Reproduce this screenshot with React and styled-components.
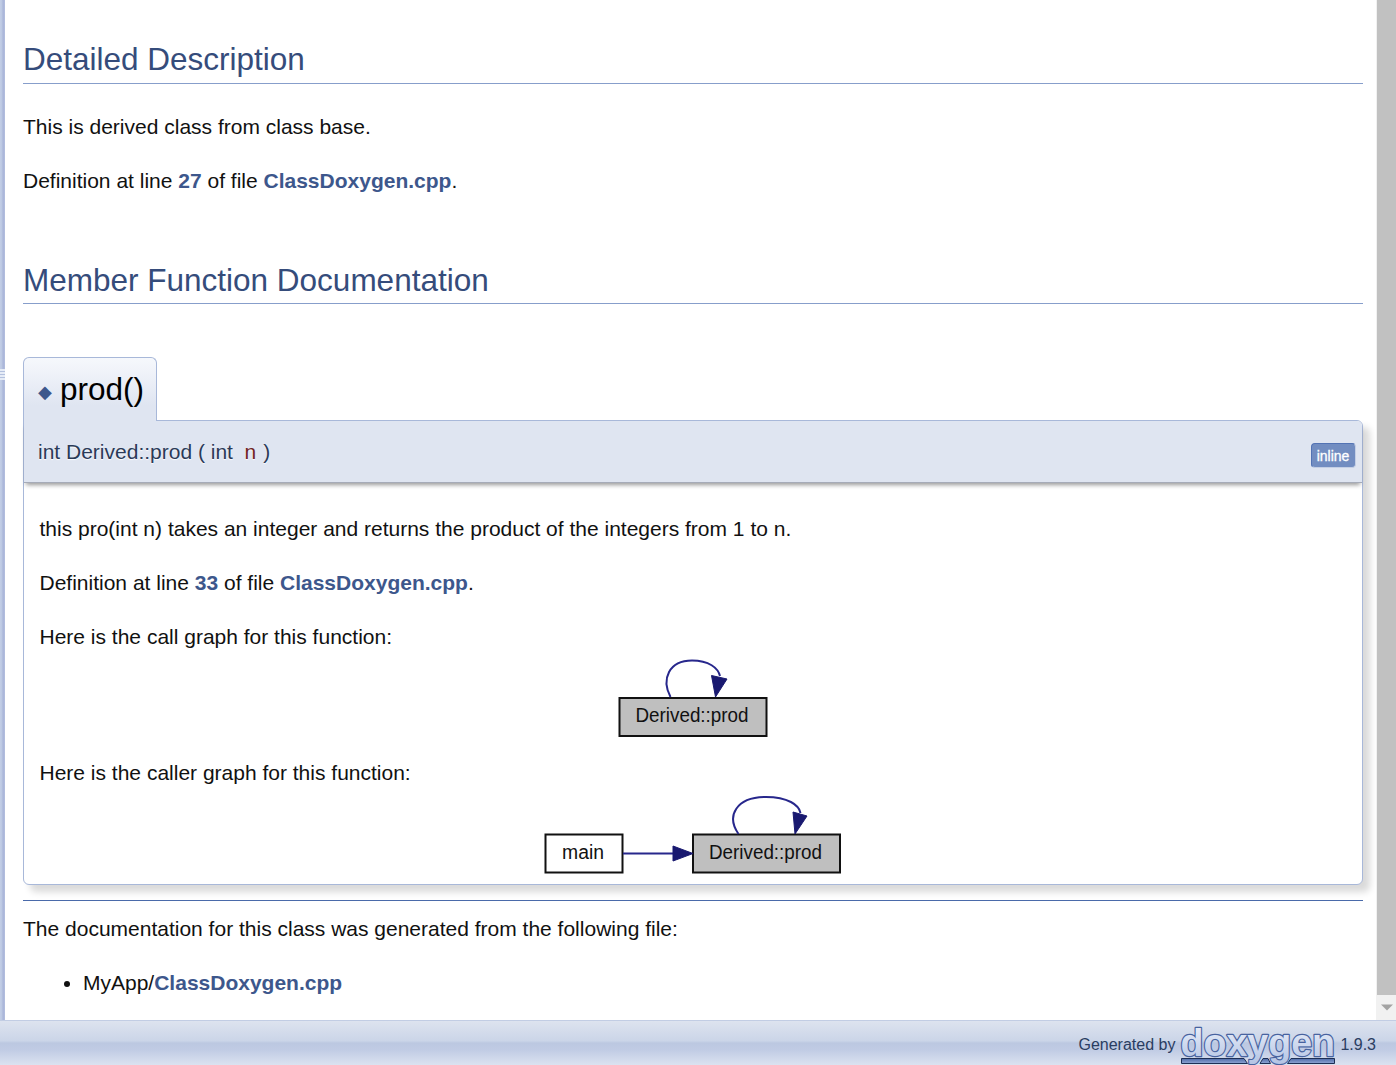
import React from "react";
import styled, { createGlobalStyle } from "styled-components";

const Global = createGlobalStyle`
  html, body { margin: 0; padding: 0; background: #fff; overflow: hidden; }
  * { box-sizing: border-box; }
  body { font: 21px/33px "Liberation Sans", Arial, sans-serif; color: #111; }
`;

const Page = styled.div`
  display: grid;
  grid-template: 1020px 45px / 5px 1fr 20px;
  width: 1396px;
  height: 1065px;
  overflow: hidden;
`;

const SplitBar = styled.div`
  display: flex;
  flex-direction: column;
  justify-content: flex-start;
  padding-top: 369px;
  background: linear-gradient(to right, #c3cee6 0, #bac7e2 2px, #a9b4d8 3px, #b3bfdf 5px);
`;

const Grip = styled.div`
  height: 11px;
  background: repeating-linear-gradient(to bottom, #e6ecf6 0 2px, #b4c1de 2px 3px);
`;

const Contents = styled.main`
  display: flex;
  flex-direction: column;
  align-items: stretch;
  padding: 37px 13px 0 18px;
  overflow: hidden;
`;

const GroupHeader = styled.h2`
  flex: none;
  margin: ${(p) => p.$top || 0}px 0 0;
  height: ${(p) => p.$height}px;
  border-bottom: 1px solid #879ecb;
  color: #354c7b;
  font-size: 31.5px;
  line-height: 44px;
  font-weight: 400;
`;

const Para = styled.p`
  flex: none;
  margin: ${(p) => p.$top ?? 21}px 0 0;
  height: 33px;
  white-space: nowrap;
`;

const Link = styled.a`
  color: #3d578c;
  font-weight: 700;
`;

const MemTitle = styled.h2`
  flex: none;
  display: flex;
  align-items: flex-start;
  align-self: flex-start;
  position: relative;
  z-index: 1;
  width: 134px;
  height: 64px;
  margin: 53px 0 -1px;
  padding: 0 0 0 14px;
  border: 1px solid #a8b8d9;
  border-bottom: 0;
  border-radius: 6px 6px 0 0;
  background: linear-gradient(#f6f8fc 0, #e9edf6 45%, #dfe5f1 75%, #dfe5f1);
  color: #000;
  font-size: 31.5px;
  font-weight: 400;
  line-height: 63px;
`;

const Permalink = styled.span`
  width: 22px;
  color: #3d578c;
  font: 18px/68px "DejaVu Sans", sans-serif;
`;

const MemItem = styled.section`
  flex: none;
  height: 465px;
  border: 1px solid #a8b8d9;
  border-radius: 0 6px 6px 6px;
  box-shadow: 7px 7px 7px rgba(0, 0, 0, 0.15);
  background: #fff;
`;

const MemProto = styled.div`
  display: flex;
  justify-content: space-between;
  height: 62px;
  padding: 0 6px 0 14px;
  border-top-right-radius: 5px;
  background: #dfe5f1;
  box-shadow: 0 4px 4px -2px rgba(0, 0, 0, 0.4);
  border-bottom: 1px solid #a6abb8;
  color: #2b3a58;
  line-height: 62px;
  text-shadow: 0 1px 1px rgba(255, 255, 255, 0.9);
  white-space: pre;
`;

const ParamName = styled.span`
  margin-right: 1px;
  color: #702424;
`;

const Label = styled.span`
  align-self: flex-start;
  width: 45px;
  height: 25px;
  margin-top: 22px;
  padding-right: 1px;
  border: 1px solid #5373b4;
  border-right-color: #c4cfe5;
  border-bottom-color: #c4cfe5;
  border-radius: 4px;
  background: #728dc1;
  color: #fff;
  font-size: 14px;
  line-height: 24px;
  text-align: center;
  text-shadow: none;
  -webkit-text-stroke: 0.3px #fff;
`;

const MemDoc = styled.div`
  display: flex;
  flex-direction: column;
  padding: 29px 16px 0 15.5px;
`;

const Graph = styled.svg`
  display: block;
  flex: none;
  width: 300px;
  height: 81px;
  margin-left: 503px;
  margin-top: ${(p) => p.$top}px;
  overflow: visible;
`;

const Rule = styled.hr`
  flex: none;
  width: 100%;
  height: 1px;
  margin: 15px 0 0;
  border: 0;
  background: #4a6aaa;
`;

const FileList = styled.ul`
  flex: none;
  margin: 21px 0 0;
  padding: 0 0 0 60px;
`;

const Scrollbar = styled.div`
  display: flex;
  flex-direction: column;
  padding-left: 1px;
  background: #f1f1f1;
`;

const Thumb = styled.div`
  height: 995px;
  background: #c1c1c1;
`;

const Arrow = styled.svg`
  width: 12px;
  height: 7px;
  margin: 9px 0 0 4px;
`;

const Footer = styled.footer`
  grid-column: 1 / -1;
  display: flex;
  justify-content: flex-end;
  padding-right: 20px;
  border-top: 1px solid #c2cde4;
  background: linear-gradient(#dde3ef 0, #cbd5e8 45%, #bcc8e1 50%, #c0cbe4 65%, #dbe2f0 100%);
  color: #2a3d61;
  font-size: 16px;
  line-height: 47px;
  white-space: nowrap;
`;

const Logo = styled.svg`
  width: 156px;
  height: 44px;
  margin: 0 4px 0 5px;
  overflow: visible;
`;

const NODE_FONT = {
  fontFamily: '"Liberation Sans", Arial, sans-serif',
  fontSize: 19.5,
  fill: "#111",
};

function ProdNode({ x }) {
  return (
    <g transform={`translate(${x} 0)`}>
      <rect x="1" y="38" width="147" height="38" fill="#bfbfbf" stroke="#111" strokeWidth="2" />
      <text x="17" y="62" textLength="113" lengthAdjust="spacingAndGlyphs" {...NODE_FONT}>
        Derived::prod
      </text>
    </g>
  );
}

function SelfLoop({ d, head }) {
  return (
    <>
      <path d={d} fill="none" stroke="#27278c" strokeWidth="2" />
      <path d={head} fill="#191970" stroke="#191970" strokeWidth="1" />
    </>
  );
}

function CallGraph() {
  return (
    <Graph $top={6} viewBox="543 659 300 81">
      <g transform="translate(0 660)">
        <ProdNode x={618.5} />
      </g>
      <SelfLoop
        d="M670.5 697C661 679 669 660.5 692 660.5C709 660.5 718 668 720 676"
        head="M711.5 675.5L727 679L715.5 697Z"
      />
    </Graph>
  );
}

function CallerGraph() {
  return (
    <Graph $top={6} viewBox="543 795 300 81">
      <g transform="translate(0 796.5)">
        <ProdNode x={692} />
      </g>
      <rect x="545.5" y="834.5" width="77" height="38" fill="#fff" stroke="#111" strokeWidth="2" />
      <text x="562" y="858.5" textLength="42" lengthAdjust="spacingAndGlyphs" {...NODE_FONT}>
        main
      </text>
      <path d="M623 853.5H674" stroke="#27278c" strokeWidth="2" />
      <path d="M673 846L693 853.5L673 861Z" fill="#191970" stroke="#191970" />
      <SelfLoop
        d="M738.5 834C726 816 736 797 766 797C788 797 799 805 800.5 813"
        head="M793 812L807 816L795 834Z"
      />
    </Graph>
  );
}

function DoxygenLogo() {
  return (
    <Logo viewBox="0 0 156 44">
      <defs>
        <linearGradient id="letters" x1="0" y1="0" x2="0" y2="1">
          <stop offset="0" stopColor="#f0f4fc" />
          <stop offset="1" stopColor="#b4c4e4" />
        </linearGradient>
        <linearGradient id="bar" x1="0" y1="0" x2="0" y2="1">
          <stop offset="0" stopColor="#4d6aa8" />
          <stop offset="1" stopColor="#8fa6d4" />
        </linearGradient>
      </defs>
      <g fill="url(#bar)" stroke="#1d2f55" strokeWidth="1">
        <path d="M1.5 37.5H64L67.5 42.5H1.5Z" />
        <path d="M83 37.5H88L90.5 42.5H80Z" />
        <path d="M111 37.5H154.5V42.5H107.5Z" />
      </g>
      <text
        x="0.5"
        y="34.5"
        textLength="154.5"
        lengthAdjust="spacingAndGlyphs"
        fontFamily='"Liberation Sans", Arial, sans-serif'
        fontWeight="700"
        fontSize="38.5"
        fill="url(#letters)"
        stroke="#48639f"
        strokeWidth="2.4"
        strokeLinejoin="round"
        paintOrder="stroke"
      >
        doxygen
      </text>
    </Logo>
  );
}

export default function App() {
  return (
    <Page>
      <Global />
      <SplitBar>
        <Grip />
      </SplitBar>
      <Contents>
        <GroupHeader $height={47}>Detailed Description</GroupHeader>
        <Para $top={26}>This is derived class from class base.</Para>
        <Para>
          Definition at line <Link>27</Link> of file <Link>ClassDoxygen.cpp</Link>.
        </Para>
        <GroupHeader $top={61} $height={46}>Member Function Documentation</GroupHeader>
        <MemTitle>
          <Permalink>◆</Permalink>prod()
        </MemTitle>
        <MemItem>
          <MemProto>
            <span>
              int Derived::prod ( int {" "}<ParamName>n</ParamName> )
            </span>
            <Label>inline</Label>
          </MemProto>
          <MemDoc>
            <Para $top={0}>
              this pro(int n) takes an integer and returns the product of the integers from 1 to n.
            </Para>
            <Para>
              Definition at line <Link>33</Link> of file <Link>ClassDoxygen.cpp</Link>.
            </Para>
            <Para>Here is the call graph for this function:</Para>
            <CallGraph />
            <Para $top={16}>Here is the caller graph for this function:</Para>
            <CallerGraph />
          </MemDoc>
        </MemItem>
        <Rule />
        <Para $top={11}>The documentation for this class was generated from the following file:</Para>
        <FileList>
          <li>
            MyApp/<Link>ClassDoxygen.cpp</Link>
          </li>
        </FileList>
      </Contents>
      <Scrollbar>
        <Thumb />
        <Arrow viewBox="0 0 12 7">
          <path d="M0 0.5H12L6 6.5Z" fill="#a3a3a3" />
        </Arrow>
      </Scrollbar>
      <Footer>
        Generated by
        <DoxygenLogo />
        1.9.3
      </Footer>
    </Page>
  );
}
